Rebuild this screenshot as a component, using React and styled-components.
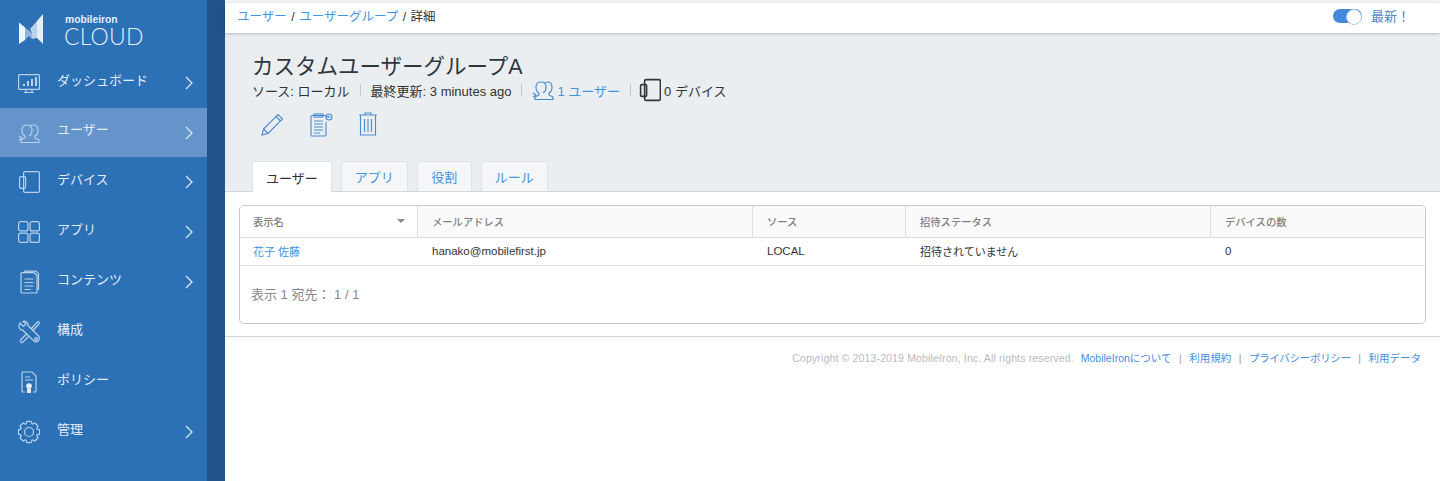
import React from "react";
import styled, { createGlobalStyle } from "styled-components";

const FONT = `"Liberation Sans", "Noto Sans CJK JP", sans-serif`;

const GlobalStyle = createGlobalStyle`
  html, body {
    margin: 0;
    padding: 0;
    background: #fff;
    font-family: ${FONT};
    overflow: hidden;
  }
  * { box-sizing: border-box; }
`;

const Page = styled.div`
  display: flex;
  width: 1440px;
  height: 481px;
  overflow: hidden;
`;

const Sidebar = styled.aside`
  width: 207px;
  flex: none;
  background: #2c70b6;
  color: #e4edf6;
`;

const Strip = styled.div`
  width: 18px;
  flex: none;
  background: #205488;
`;

const Brand = styled.div`
  height: 58px;
  display: flex;
  align-items: flex-start;
  padding: 14px 0 0 18px;
  gap: 21px;
`;

const BrandText = styled.div`
  display: flex;
  flex-direction: column;
  color: #e4eef8;
`;

const BrandTop = styled.span`
  font-size: 10.3px;
  font-weight: 700;
  line-height: 10px;
  margin-top: 1px;
`;

const BrandCloud = styled.span`
  font-family: "Lato", sans-serif;
  font-weight: 300;
  font-size: 23px;
  line-height: 22px;
  letter-spacing: 0.2px;
  margin-left: -1px;
`;

const NavItem = styled.div`
  display: flex;
  align-items: center;
  height: ${(p) => p.$h || 50}px;
  padding-left: 18px;
  background: ${(p) => (p.$active ? "#6494c9" : "transparent")};
`;

const NavIcon = styled.svg`
  width: 22px;
  height: 24px;
  flex: none;
  fill: none;
  stroke: #b9d2ea;
  stroke-width: 1.2;
`;

const NavLabel = styled.span`
  margin-left: 17px;
  font-size: 13px;
  position: relative;
  top: -4px;
  flex: 1;
`;

const Chevron = styled.svg`
  width: 8px;
  height: 14px;
  margin-right: 14px;
  fill: none;
  stroke: #dbe7f3;
  stroke-width: 1.3;
`;

const Main = styled.main`
  flex: 1;
  min-width: 0;
  background: #fff;
`;

const TopGap = styled.div`
  height: 3px;
  background: #f3f3f3;
`;

const TopBar = styled.div`
  height: 30px;
  display: flex;
  align-items: center;
  justify-content: space-between;
  padding: 0 30px 6px 12px;
  background: #fff;
  box-shadow: 0 1px 3px rgba(0, 0, 0, 0.22);
  position: relative;
  font-size: 12.5px;
  word-spacing: 1px;
  color: #333;
`;

const A = styled.span`
  color: #3f94e6;
`;

const Toggle = styled.div`
  display: flex;
  align-items: center;
  gap: 9px;
  font-size: 13px;
  color: #4f86c0;
`;

const Switch = styled.div`
  width: 29px;
  height: 14px;
  margin-top: 1px;
  border-radius: 7px;
  background: #4389db;
  position: relative;
  &::after {
    content: "";
    position: absolute;
    right: 0;
    top: 0;
    width: 14px;
    height: 14px;
    border-radius: 50%;
    background: #fff;
    border: 1px solid #a9c9ee;
  }
`;

const Panel = styled.section`
  height: 159px;
  background: #ebeef1;
  border-bottom: 1px solid #d5d8db;
  padding: 20px 0 0 27px;
`;

const Title = styled.h1`
  margin: 0;
  font-size: 21.5px;
  font-weight: 400;
  line-height: 28px;
  color: #2f363d;
`;

const Meta = styled.div`
  display: flex;
  align-items: center;
  height: 20px;
  margin-top: -1px;
  font-size: 13px;
  color: #333;
`;

const Sep = styled.span`
  width: 1px;
  height: 12px;
  margin: 0 ${(p) => p.$r || 10}px 0 10px;
  background: #c3c8cd;
`;

const MetaIcon = styled.svg`
  width: 22px;
  height: 24px;
  margin-right: 3px;
  fill: none;
  stroke: ${(p) => p.$c};
  stroke-width: ${(p) => p.$sw};
`;

const Actions = styled.div`
  display: flex;
  align-items: center;
  gap: 21.5px;
  margin: 11px 0 0 8px;
`;

const ActionIcon = styled.svg`
  width: 26px;
  height: 26px;
  fill: none;
  stroke: #4a8bd0;
  stroke-width: 1.1;
`;

const Tabs = styled.div`
  display: flex;
  gap: 9px;
  margin-top: 24px;
`;

const Tab = styled.div`
  height: ${(p) => (p.$active ? 31 : 30)}px;
  min-width: 55px;
  padding: 0 13px;
  display: flex;
  align-items: center;
  justify-content: center;
  font-size: 13px;
  color: ${(p) => (p.$active ? "#333" : "#4293e4")};
  background: ${(p) => (p.$active ? "#fff" : "#f4f6f8")};
  border: 1px solid #dfe3e7;
  border-bottom: none;
  border-radius: 3px 3px 0 0;
`;

const Content = styled.div`
  padding: 13px 14px 12px;
  border-bottom: 1px solid #d5d8db;
  box-shadow: 0 1px 3px rgba(0, 0, 0, 0.06);
`;

const Card = styled.div`
  height: 119px;
  border: 1px solid #c8cbce;
  border-radius: 5px;
  overflow: hidden;
`;

const Row = styled.div`
  display: grid;
  grid-template-columns: 178px 335px 153px 305px 1fr;
  border-bottom: 1px solid #dde0e3;
  height: ${(p) => p.$h}px;
`;

const Th = styled.div`
  display: flex;
  align-items: center;
  justify-content: space-between;
  padding: 0 ${(p) => (p.$first ? 12 : 14)}px 1px ${(p) => (p.$first ? 13 : 14)}px;
  background: ${(p) => (p.$first ? "#fff" : "#fafafa")};
  border-right: 1px solid #dde0e3;
  font-size: 10.3px;
  font-weight: 500;
  color: #808080;
  &:last-child { border-right: none; }
`;

const Caret = styled.span`
  width: 0;
  height: 0;
  border-left: 4px solid transparent;
  border-right: 4px solid transparent;
  border-top: 4px solid #8a8a8a;
`;

const Td = styled.div`
  display: flex;
  align-items: center;
  padding: 0 0 2px ${(p) => (p.$first ? 13 : 14)}px;
  font-size: ${(p) => (p.$jp ? 11 : 11.5)}px;
  color: ${(p) => (p.$link ? "#3f94e6" : "#333")};
`;

const Pager = styled.div`
  padding: 20px 0 0 11px;
  font-size: 13px;
  line-height: 18px;
  color: #85898d;
`;

const Footer = styled.footer`
  display: flex;
  justify-content: flex-end;
  align-items: center;
  padding: 14px 19px 0 0;
  font-size: 10.5px;
  line-height: 14px;
  color: #b8bbbe;
`;

const Copyright = styled.span`
  letter-spacing: 0.15px;
  margin-right: 7px;
`;

const FootLink = styled.span`
  color: #3f8fdf;
  letter-spacing: ${(p) => (p.$tight ? "-0.3px" : "0")};
`;

const FootSep = styled.span`
  margin: 0 7.5px;
  color: #9aa0a6;
`;

// 8 tooth gear outline, computed so the teeth stay even
const gearPath = () => {
  const pts = [];
  for (let i = 0; i < 8; i++) {
    const a = (i * Math.PI) / 4 - Math.PI / 2;
    [[-0.36, 8.6], [-0.2, 10.8], [0.2, 10.8], [0.36, 8.6]].forEach(([da, r]) => {
      pts.push(`${(11 + r * Math.cos(a + da)).toFixed(2)} ${(12 + r * Math.sin(a + da)).toFixed(2)}`);
    });
  }
  return `M${pts.join("L")}Z`;
};

const paths = {
  dash: (
    <>
      <rect x="0.6" y="3.6" width="20.8" height="14.8" rx="1" />
      <path d="M8 18.5v2.5M14 18.5v2.5M6 21.5h10" />
      <path d="M6 15v-2M10 15v-5M14 15v-7M18 15V6" strokeWidth="2" />
    </>
  ),
  user: (
    <>
      <path d="M7 15c-2-1-3-3-3-6 0-3 2-5 5-5s5 2 5 5c0 3-1 5-3 6" />
      <path d="M12 5.500c1-1 2-1.500 3.500-1.500 3 0 4.500 2 4.500 5 0 3-1 5-3 6v2l4 2v2.500H8" />
      <path d="M7 15v2l-4 2v2.500h5" />
      <path d="M1 15l3 2-3 2" />
    </>
  ),
  device: (
    <>
      <rect x="5.600" y="1.600" width="15.800" height="20.800" rx="1.500" />
      <rect x="1.600" y="6.600" width="6" height="11.800" rx="1.200" />
    </>
  ),
  app: (
    <>
      <rect x="0.600" y="1.600" width="9.300" height="9.300" rx="2" />
      <rect x="12.100" y="1.600" width="9.300" height="9.300" rx="2" />
      <rect x="0.600" y="13.100" width="9.300" height="9.300" rx="2" />
      <rect x="12.100" y="13.100" width="9.300" height="9.300" rx="2" />
    </>
  ),
  content: (
    <>
      <path d="M4 2.600h12l3 3V22a1 1 0 0 1-1 1H4a1 1 0 0 1-1-1V3.600a1 1 0 0 1 1-1z" />
      <path d="M6 1.200h12l2.500 2.500V20" />
      <path d="M6.500 9h9M6.500 12.500h9M6.500 16h9M6.500 19.500h6" />
    </>
  ),
  tools: (
    <>
      <path d="M2 3l3.500 3.500L8 4 5 1.500C7.500.5 10.500 2.500 10 5.500L20.500 16c1.500 1.500 1 5.500-2.500 6-1.500.2-2.500-1-3-2L4.500 10C2 10.500 0 7 1.500 4z" />
      <path d="M13 9l5.500-6 2-1.500 1 1.500-1.500 2-5.500 6" />
      <path d="M9 13.500l-6 6c-1.500 1.500-.5 3.500 1.500 3l6-6" />
      <circle cx="18" cy="19" r="1.300" />
    </>
  ),
  policy: (
    <>
      <path d="M7 22H5a1 1 0 0 1-1-1V3a1 1 0 0 1 1-1h9l4 4v15a1 1 0 0 1-1 1h-2" />
      <path d="M7 7h5M7 10h8" />
      <circle cx="11" cy="16" r="2.800" fill="#e4edf6" stroke="none" />
      <path d="M9 18.500V23h4v-4.500" fill="#e4edf6" stroke="none" />
    </>
  ),
  gear: (
    <>
      <path d={gearPath()} />
      <circle cx="11" cy="12" r="4.500" />
    </>
  ),
};

const nav = [
  { label: "ダッシュボード", icon: "dash", more: true },
  { label: "ユーザー", icon: "user", more: true, active: true, h: 49 },
  { label: "デバイス", icon: "device", more: true },
  { label: "アプリ", icon: "app", more: true },
  { label: "コンテンツ", icon: "content", more: true },
  { label: "構成", icon: "tools" },
  { label: "ポリシー", icon: "policy" },
  { label: "管理", icon: "gear", more: true },
];

export default function App() {
  return (
    <Page>
      <GlobalStyle />
      <Sidebar>
        <Brand>
          <svg width="26" height="31" viewBox="0 0 26 31">
            <path d="M7 13.500L14 19v6l-3-3-4 4z" fill="#8fb6dc" />
            <path d="M1 8.500l6 5V26l-6 4z" fill="#eef5fb" />
            <path d="M19 7l-7 8 2 4v6l5-1z" fill="#b8d2ea" />
            <path d="M25 0v30l-6-6V7z" fill="#e3eef8" />
          </svg>
          <BrandText>
            <BrandTop>mobileiron</BrandTop>
            <BrandCloud>CLOUD</BrandCloud>
          </BrandText>
        </Brand>
        {nav.map((item) => (
          <NavItem key={item.label} $active={item.active} $h={item.h}>
            <NavIcon viewBox="0 0 22 24">{paths[item.icon]}</NavIcon>
            <NavLabel>{item.label}</NavLabel>
            {item.more && (
              <Chevron viewBox="0 0 8 14">
                <path d="M1 1l6 6-6 6" />
              </Chevron>
            )}
          </NavItem>
        ))}
      </Sidebar>
      <Strip />
      <Main>
        <TopGap />
        <TopBar>
          <span>
            <A>ユーザー</A> / <A>ユーザーグループ</A> / 詳細
          </span>
          <Toggle>
            <Switch />
            最新！
          </Toggle>
        </TopBar>
        <Panel>
          <Title>カスタムユーザーグループA</Title>
          <Meta>
            ソース: ローカル
            <Sep />
            最終更新: 3 minutes ago
            <Sep />
            <MetaIcon $c="#4a8bd0" $sw={1.2} viewBox="0 0 22 24">{paths.user}</MetaIcon>
            <A>1 ユーザー</A>
            <Sep $r={8} />
            <MetaIcon $c="#2f363d" $sw={1.6} viewBox="0 0 22 24">{paths.device}</MetaIcon>
            0 デバイス
          </Meta>
          <Actions>
            <ActionIcon viewBox="0 0 26 26">
              <path d="M2 24l1.500-6L18 3.500l4.500 4.500L8 22.500z" />
              <path d="M16 5.500l4.500 4.500M3.500 18L8 22.500" />
            </ActionIcon>
            <ActionIcon viewBox="0 0 26 26">
              <path d="M18 6v-.5a1 1 0 0 0-1-1H4a1 1 0 0 0-1 1V24a1 1 0 0 0 1 1h13a1 1 0 0 0 1-1V11" />
              <rect x="6" y="3" width="9" height="3" />
              <path d="M6 10h9M6 13h9M6 16h9M6 19h9M6 22h6" />
              <circle cx="21" cy="6" r="3" />
              <path d="M22.500 6h-3l1.500-1.200" />
            </ActionIcon>
            <ActionIcon viewBox="0 0 26 26">
              <path d="M4 4h18M10 4V2h6v2M5.500 4v20h15V4" />
              <path d="M9.500 8v13M13 8v13M16.500 8v13" />
            </ActionIcon>
          </Actions>
          <Tabs>
            <Tab $active>ユーザー</Tab>
            <Tab>アプリ</Tab>
            <Tab>役割</Tab>
            <Tab>ルール</Tab>
          </Tabs>
        </Panel>
        <Content>
          <Card>
            <Row $h={32}>
              <Th $first>
                表示名
                <Caret />
              </Th>
              <Th>メールアドレス</Th>
              <Th>ソース</Th>
              <Th>招待ステータス</Th>
              <Th>デバイスの数</Th>
            </Row>
            <Row $h={28}>
              <Td $first $link $jp>花子 佐藤</Td>
              <Td>hanako@mobilefirst.jp</Td>
              <Td>LOCAL</Td>
              <Td $jp>招待されていません</Td>
              <Td>0</Td>
            </Row>
            <Pager>表示 1 宛先： 1 / 1</Pager>
          </Card>
        </Content>
        <Footer>
          <Copyright>Copyright © 2013-2019 MobileIron, Inc. All rights reserved.</Copyright>
          <FootLink>MobileIronについて</FootLink>
          <FootSep>|</FootSep>
          <FootLink>利用規約</FootLink>
          <FootSep>|</FootSep>
          <FootLink $tight>プライバシーポリシー</FootLink>
          <FootSep>|</FootSep>
          <FootLink>利用データ</FootLink>
        </Footer>
      </Main>
    </Page>
  );
}
